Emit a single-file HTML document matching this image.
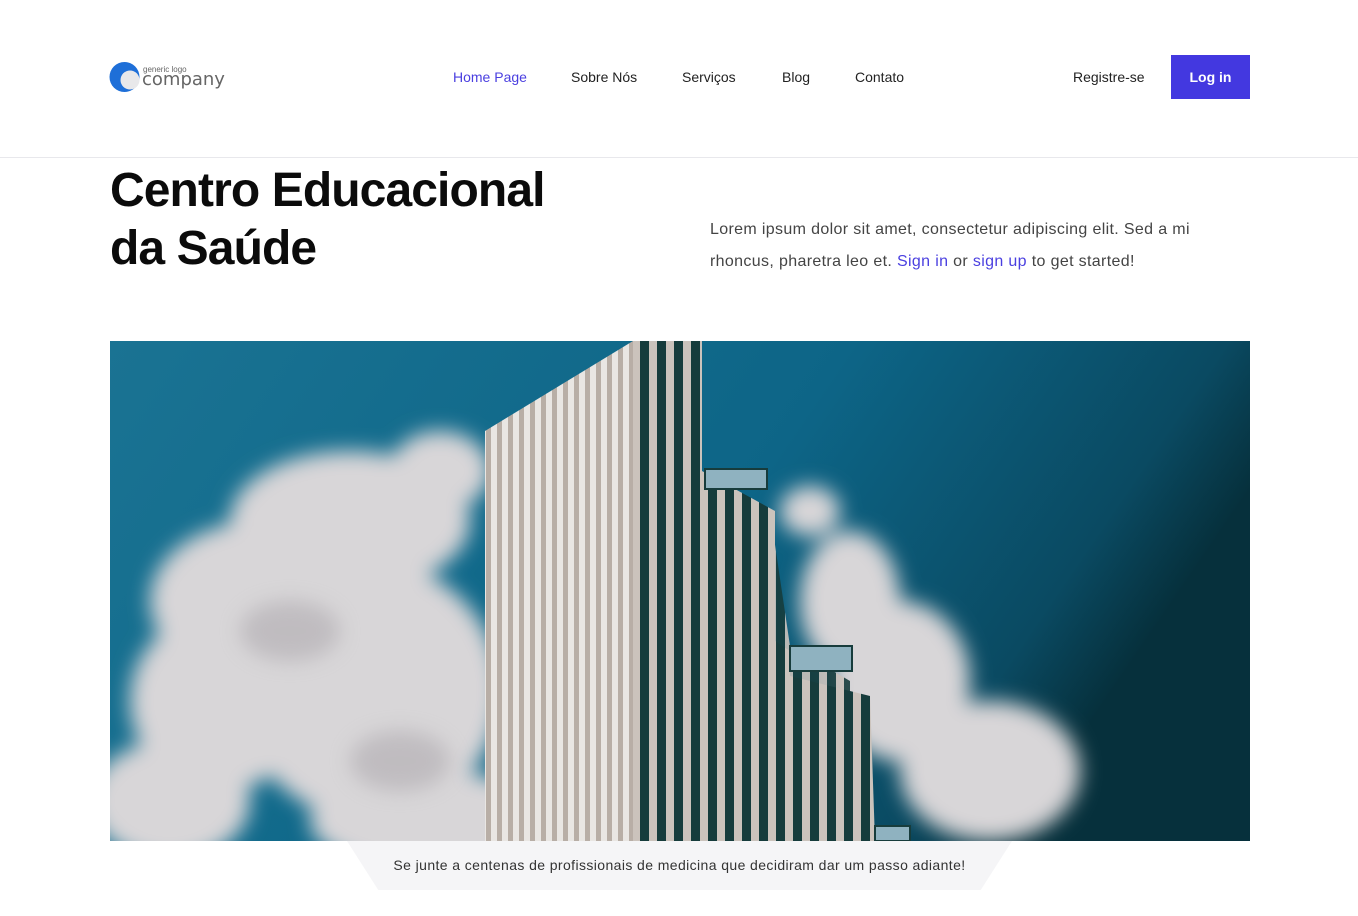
<!DOCTYPE html>
<html><head><meta charset="utf-8"><style>
*{margin:0;padding:0;box-sizing:border-box}
body{width:1358px;height:916px;background:#fff;font-family:"Liberation Sans",sans-serif;position:relative;overflow:hidden;color:#222}
.nav a{position:absolute;top:69px;font-size:14px;color:#222;text-decoration:none}
.hr{position:absolute;top:157px;left:0;width:1358px;height:1px;background:#e8e8ec}
h1{position:absolute;left:110px;top:162px;font-size:48px;line-height:58px;font-weight:700;letter-spacing:-0.9px;color:#0b0b0b}
.p{position:absolute;left:710px;top:214px;width:540px;font-size:16px;line-height:32px;color:#444;letter-spacing:0.35px}
.p span{color:#4a3fe0}
.btn{position:absolute;left:1171px;top:55px;width:79px;height:44px;background:#4338e0;color:#fff;font-size:14px;font-weight:700;text-align:center;line-height:44px}
.cap{position:absolute;top:841px;left:347px;width:665px;height:49px;background:#f5f5f7;clip-path:polygon(0 0,100% 0,95.3% 100%,4.7% 100%);font-size:14px;letter-spacing:0.4px;color:#333;text-align:center;line-height:48px}
</style></head><body>
<svg style="position:absolute;left:109px;top:61px" width="32" height="32"><circle cx="15.5" cy="16" r="15" fill="#1e6fd8"/><circle cx="21" cy="19" r="9.5" fill="#e8e8ea"/></svg>
<div style="position:absolute;left:143px;top:65px;font-size:8px;line-height:9px;color:#666">generic logo</div>
<div style="position:absolute;left:142px;top:70px;font-size:18px;line-height:20px;color:#666;font-family:'DejaVu Sans',sans-serif">company</div>
<div class="nav"><a style="left:453px;color:#4a3fe0">Home Page</a><a style="left:571px">Sobre Nós</a><a style="left:682px">Serviços</a><a style="left:782px">Blog</a><a style="left:855px">Contato</a><a style="left:1073px">Registre-se</a></div>
<div class="btn">Log in</div>
<div class="hr"></div>
<h1>Centro Educacional<br>da Saúde</h1>
<div class="p">Lorem ipsum dolor sit amet, consectetur adipiscing elit. Sed a mi rhoncus, pharetra leo et. <span>Sign in</span> or <span>sign up</span> to get started!</div>
<svg style="position:absolute;left:110px;top:341px" width="1140" height="500" viewBox="0 0 1140 500">
<defs>
<linearGradient id="sky" x1="0" y1="0" x2="1" y2="0.3"><stop offset="0" stop-color="#1a7393"/><stop offset="0.6" stop-color="#0d6587"/><stop offset="0.9" stop-color="#0a4a62"/><stop offset="1" stop-color="#06303c"/></linearGradient>
<filter id="bl" x="-50%" y="-50%" width="200%" height="200%"><feGaussianBlur stdDeviation="10"/></filter>
<pattern id="lw" width="11" height="20" patternUnits="userSpaceOnUse"><rect width="11" height="20" fill="#e9e6e3"/><rect x="2" width="5" height="20" fill="#b8aea6"/></pattern>
<pattern id="dw" width="17" height="20" patternUnits="userSpaceOnUse"><rect width="17" height="20" fill="#cbc3bc"/><rect x="3" width="9" height="20" fill="#163c3c"/></pattern>
</defs>
<rect width="1140" height="500" fill="url(#sky)"/>
<g filter="url(#bl)" fill="#d8d6d8">
<ellipse cx="240" cy="180" rx="120" ry="70"/>
<ellipse cx="330" cy="130" rx="50" ry="40"/>
<ellipse cx="150" cy="260" rx="110" ry="80"/>
<ellipse cx="110" cy="360" rx="90" ry="90"/>
<ellipse cx="260" cy="350" rx="130" ry="130"/>
<ellipse cx="60" cy="460" rx="80" ry="60"/>
<ellipse cx="320" cy="480" rx="120" ry="50"/>
<ellipse cx="740" cy="260" rx="50" ry="70"/>
<ellipse cx="790" cy="340" rx="70" ry="80"/>
<ellipse cx="880" cy="430" rx="90" ry="70"/>
<ellipse cx="700" cy="170" rx="30" ry="25"/>
</g>
<g filter="url(#bl)" fill="#a7a3a8" opacity=".5"><ellipse cx="180" cy="290" rx="50" ry="30"/><ellipse cx="290" cy="420" rx="50" ry="30"/></g>
<polygon points="375,90 523,0 523,500 375,500" fill="url(#lw)"/>
<polygon points="523,0 592,0 592,130 665,170 665,300 680,310 680,500 523,500" fill="url(#dw)"/>
<polygon points="592,140 660,170 680,305 740,340 740,500 592,500" fill="url(#dw)" opacity=".9"/>
<polygon points="680,335 760,355 765,500 680,500" fill="url(#dw)"/>
<rect x="595" y="128" width="62" height="20" fill="#8fb2c0" stroke="#173c3c" stroke-width="2"/>
<rect x="680" y="305" width="62" height="25" fill="#8fb2c0" stroke="#173c3c" stroke-width="2"/>
<rect x="765" y="485" width="35" height="15" fill="#8fb2c0" stroke="#173c3c" stroke-width="2"/>
</svg>
<div class="cap">Se junte a centenas de profissionais de medicina que decidiram dar um passo adiante!</div>
</body></html>
